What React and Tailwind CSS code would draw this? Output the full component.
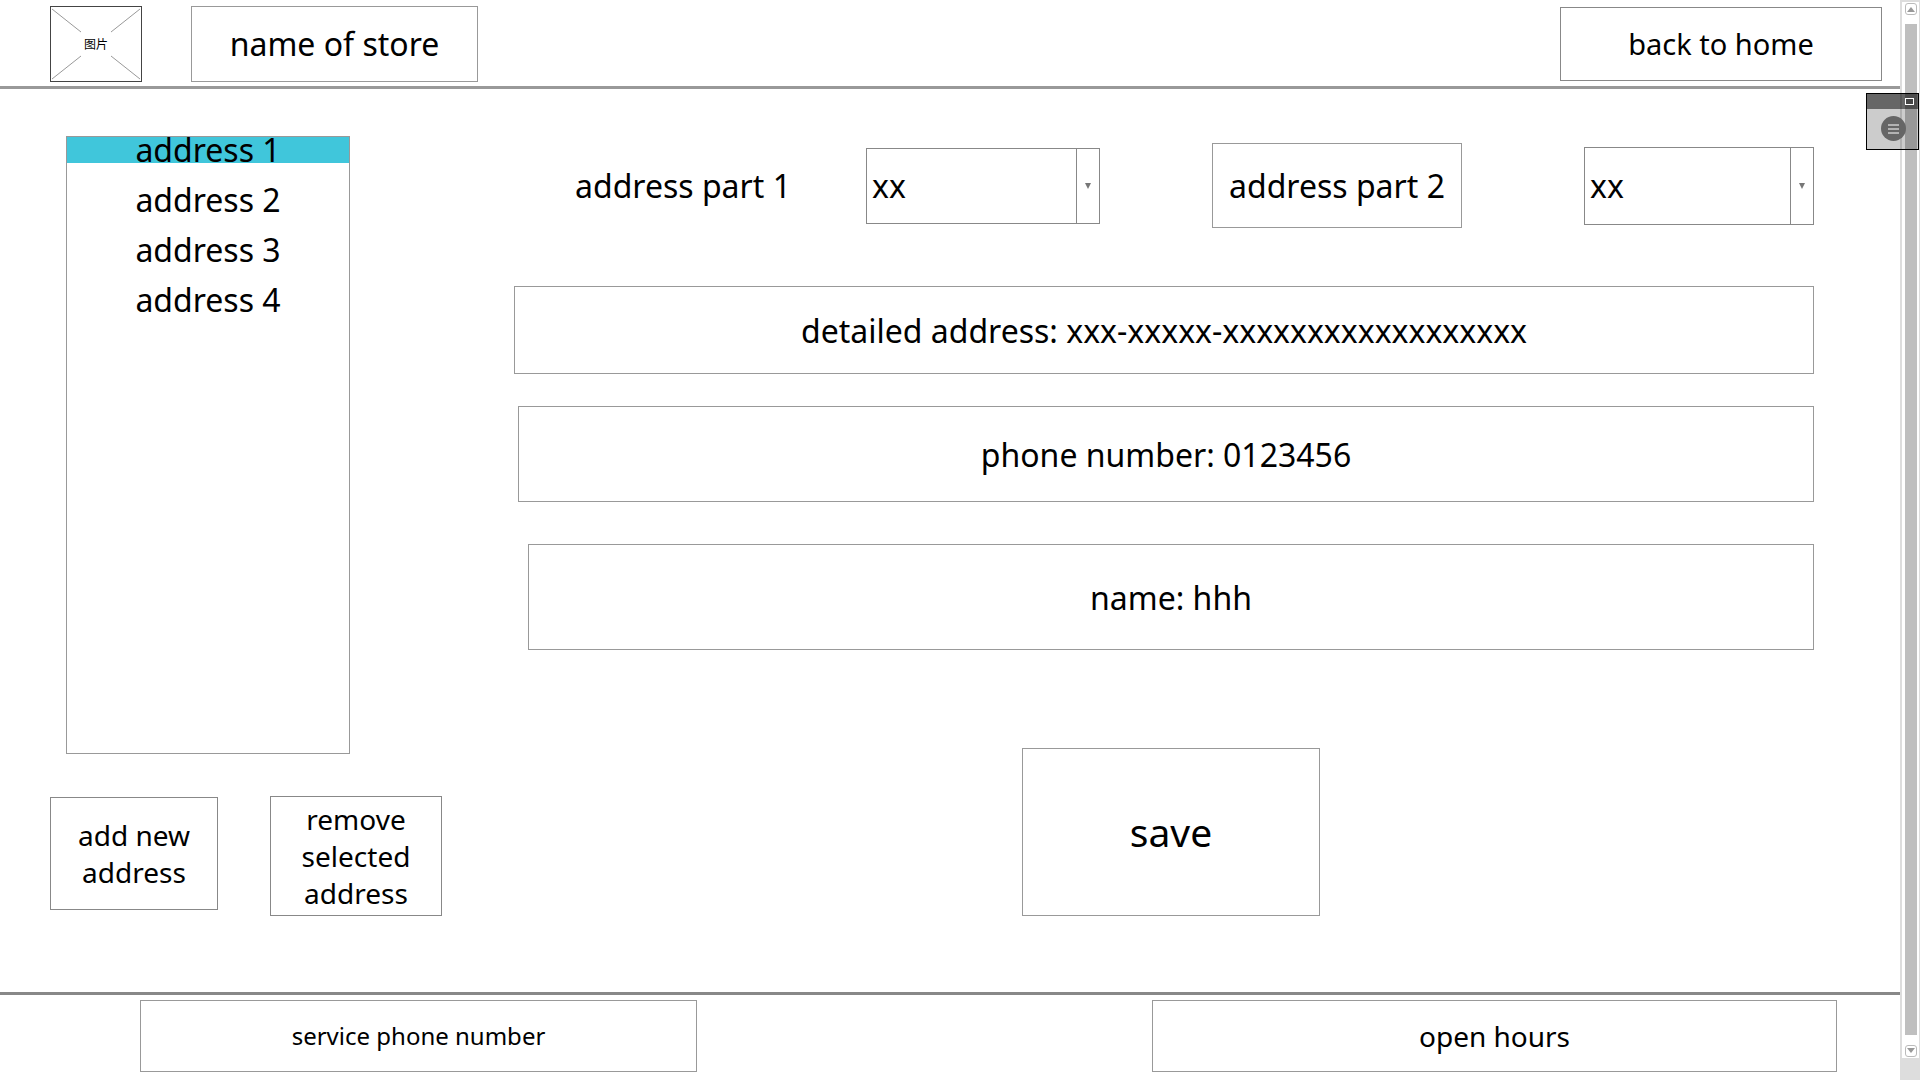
import { useState } from "react";

const addresses = ["address 1", "address 2", "address 3", "address 4"];

function PartSelect({ id, className }) {
  return (
    <div className={`relative flex border border-[#888] ${className}`}>
      <select id={id} className="w-full appearance-none bg-transparent pl-[5px] pr-7 text-[32px] outline-none">
        <option>xx</option>
      </select>
      <span className="pointer-events-none absolute inset-y-0 right-0 flex w-[23px] items-center justify-center border-l border-[#888]">
        <svg width="6" height="6" viewBox="0 0 6 6" fill="#777" aria-hidden="true">
          <path d="M0 0H6L3 6Z" />
        </svg>
      </span>
    </div>
  );
}

function Field({ label, value, className }) {
  return (
    <input
      type="text"
      aria-label={label}
      defaultValue={value}
      className={`border border-[#999] bg-white text-center text-[32px] outline-none ${className}`}
    />
  );
}

function ScrollButton({ down }) {
  return (
    <button
      type="button"
      aria-label={down ? "Scroll down" : "Scroll up"}
      className="flex h-3 w-3 shrink-0 items-center justify-center rounded-[3px] border border-[#bbb] bg-white"
    >
      <svg width="8" height="6" viewBox="0 0 8 6" fill="#999" aria-hidden="true">
        <path d={down ? "M0 0H8L4 5Z" : "M0 6H8L4 1Z"} />
      </svg>
    </button>
  );
}

export default function App() {
  const [selected, setSelected] = useState(0);

  return (
    <div className="relative flex min-h-screen bg-white font-['Noto_Sans','Noto_Sans_CJK_SC',sans-serif] text-black">
      <div className="flex min-w-0 flex-1 flex-col">
        <header className="flex items-start border-b-[3px] border-[#999] pb-1 pl-[50px] pr-[18px] pt-[6px]">
          <svg width="92" height="76" viewBox="0 0 92 76" className="shrink-0" role="img" aria-label="图片">
            <rect x="0.5" y="0.5" width="91" height="75" fill="white" stroke="#444" />
            <path d="M2 3L31 26M90 3L61 26M2 73L31 50M90 73L61 50" stroke="#999" fill="none" />
            <text x="46" y="43" fontSize="12" textAnchor="middle">
              图片
            </text>
          </svg>
          <h1 className="ml-[49px] flex h-[76px] w-[287px] items-center justify-center border border-[#999] text-[32px]">
            name of store
          </h1>
          <button type="button" className="ml-auto mt-px h-[74px] w-[322px] border border-[#888] text-[29px]">
            back to home
          </button>
        </header>

        <main className="flex flex-1">
          <section className="flex w-[514px] shrink-0 flex-col pl-[50px] pt-[47px]">
            <ul className="ml-4 flex h-[618px] w-[284px] flex-col gap-6 border border-[#999]">
              {addresses.map((name, index) => (
                <li key={name} className="flex">
                  <button
                    type="button"
                    aria-pressed={index === selected}
                    onClick={() => setSelected(index)}
                    className={`h-[26px] w-full text-[32px] leading-[26px] ${index === selected ? "bg-[#40c6db]" : ""}`}
                  >
                    {name}
                  </button>
                </li>
              ))}
            </ul>
            <div className="mt-[42px] flex items-start gap-[52px]">
              <button type="button" className="mt-px h-[113px] w-[168px] border border-[#888] px-4 text-[28px] leading-[37px]">
                add new address
              </button>
              <button type="button" className="h-[120px] w-[172px] border border-[#888] px-4 text-[28px] leading-[37px]">
                remove selected address
              </button>
            </div>
          </section>

          <form className="flex min-w-0 flex-1 flex-col pr-[86px] pt-[54px]" onSubmit={(event) => event.preventDefault()}>
            <div className="grid h-[85px] grid-cols-[352fr_346fr_372fr_230fr] items-center">
              <label htmlFor="part-1" className="pl-[61px] text-[32px]">
                address part 1
              </label>
              <PartSelect id="part-1" className="h-[76px] w-[234px]" />
              <label
                htmlFor="part-2"
                className="flex h-[85px] w-[250px] items-center justify-center border border-[#999] text-[32px]"
              >
                address part 2
              </label>
              <PartSelect id="part-2" className="h-[78px]" />
            </div>
            <Field label="detailed address" value="detailed address: xxx-xxxxx-xxxxxxxxxxxxxxxxxx" className="mt-[58px] h-[88px]" />
            <Field label="phone number" value="phone number: 0123456" className="ml-1 mt-8 h-24" />
            <Field label="name" value="name: hhh" className="ml-[14px] mt-[42px] h-[106px]" />
            <button type="submit" className="ml-[14px] mt-[98px] h-[168px] w-[298px] self-center border border-[#999] text-[39px]">
              save
            </button>
          </form>
        </main>

        <footer className="flex justify-between border-t-[3px] border-[#888] pb-2 pl-[140px] pr-[63px] pt-[5px]">
          <div className="flex h-[72px] w-[557px] items-center justify-center border border-[#999] text-[24px]">
            service phone number
          </div>
          <div className="flex h-[72px] w-[685px] items-center justify-center border border-[#999] text-[28px]">
            open hours
          </div>
        </footer>
      </div>

      <div className="flex w-5 shrink-0 flex-col bg-[#ddd]">
        <div className="flex flex-1 flex-col items-center border-2 border-r border-[#ddd] bg-white py-px">
          <ScrollButton />
          <div className="mb-[10px] mt-[9px] w-3 flex-1 bg-[#bfbfbf]" />
          <ScrollButton down />
        </div>
        <div className="h-5" />
      </div>

      <div className="absolute right-[1px] top-[93px] flex h-[57px] w-[53px] flex-col border border-black bg-black/20">
        <div className="flex h-[15px] justify-end bg-black/50 pr-1 pt-1">
          <button type="button" aria-label="Restore" className="h-[7px] w-[9px] border border-white bg-[#444]" />
        </div>
        <button
          type="button"
          aria-label="Menu"
          className="ml-[14px] mt-[7px] flex h-[25px] w-[25px] items-center justify-center rounded-full bg-[#666]"
        >
          <svg width="11" height="10" viewBox="0 0 11 10" stroke="white" aria-hidden="true">
            <path d="M0 1H11M0 5H11M0 9H11" />
          </svg>
        </button>
      </div>
    </div>
  );
}
